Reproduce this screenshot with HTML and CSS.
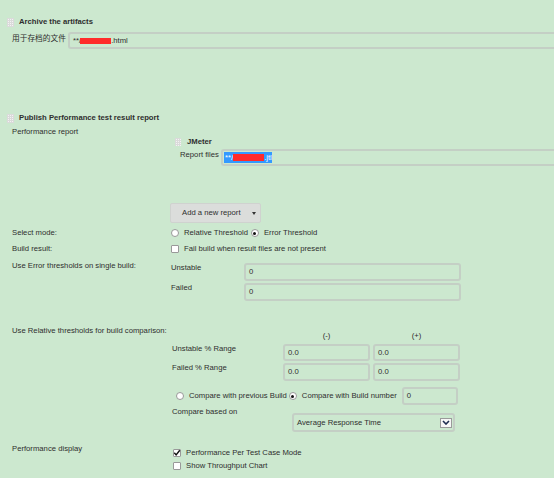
FILE: index.html
```html
<!DOCTYPE html>
<html>
<head>
<meta charset="utf-8">
<link rel="stylesheet" href="styles.css">
</head>
<body>
<div class="page">
  <section class="archive">
    <div class="head"><span class="grip"></span><span class="title">Archive the artifacts</span></div>
    <div class="line">
      <div class="lbl cn">用于存档的文件</div>
      <div class="field wide">**/<span class="redact r1"></span>.html</div>
    </div>
  </section>

  <section class="perf">
    <div class="head"><span class="grip"></span><span class="title">Publish Performance test result report</span></div>
    <div class="lbl top">Performance report</div>
    <div class="report">
      <div class="subhead"><span class="grip small"></span><span class="title">JMeter</span></div>
      <div class="line files">
        <div class="lbl">Report files</div>
        <div class="field wide tight"><span class="sel">**/<span class="redact r2"></span>.jtl</span></div>
      </div>
    </div>
    <div class="btnrow"><div class="btn">Add a new report<span class="caret"></span></div></div>

    <div class="row mode">
      <div class="lbl">Select mode:</div>
      <div class="ctl">
        <span class="radio"></span><span class="opt gap3">Relative Threshold</span>
        <span class="radio on"></span><span class="opt">Error Threshold</span>
      </div>
    </div>

    <div class="row build">
      <div class="lbl">Build result:</div>
      <div class="ctl">
        <span class="chk"></span><span class="opt">Fail build when result files are not present</span>
      </div>
    </div>

    <div class="row err">
      <div class="lbl">Use Error thresholds on single build:</div>
      <div class="errsub">
        <div class="sl">Unstable</div><div class="field ef">0</div>
        <div class="sl">Failed</div><div class="field ef">0</div>
      </div>
    </div>

    <div class="row rel">
      <div class="lbl">Use Relative thresholds for build comparison:</div>
      <div class="relsub">
        <div class="rr hdr"><span class="rl"></span><span class="rc">(-)</span><span class="rc">(+)</span></div>
        <div class="rr r1row"><span class="rl">Unstable % Range</span><div class="field sm h17">0.0</div><div class="field sm h17">0.0</div></div>
        <div class="rr r2row"><span class="rl">Failed % Range</span><div class="field sm">0.0</div><div class="field sm">0.0</div></div>
        <div class="cmp">
          <span class="radio"></span><span class="opt gap2">Compare with previous Build</span>
          <span class="radio on"></span><span class="opt gap5">Compare with Build number</span>
          <div class="field num">0</div>
        </div>
        <div class="based">
          <div class="bl">Compare based on</div>
          <div class="field select">Average Response Time<span class="dd"><svg width="8" height="5" viewBox="0 0 8 5"><path d="M1 1 L4 4 L7 1" fill="none" stroke="#1d2b4f" stroke-width="1.6"/></svg></span></div>
        </div>
      </div>
    </div>

    <div class="row disp">
      <div class="lbl">Performance display</div>
      <div class="checks">
        <div class="ck"><span class="chk"><svg width="8" height="8" viewBox="0 0 8 8"><path d="M1.3 3.8 L3.1 5.9 L6.8 1.2" fill="none" stroke="#111" stroke-width="1.4"/></svg></span><span class="opt">Performance Per Test Case Mode</span></div>
        <div class="ck"><span class="chk"></span><span class="opt">Show Throughput Chart</span></div>
      </div>
    </div>
  </section>
</div>
</body>
</html>
```

FILE: styles.css
```css
html, body {
  margin: 0;
  padding: 0;
}
body {
  background: #cce8cf;
  width: 554px;
  height: 478px;
  overflow: hidden;
  font-family: "Liberation Sans", Arial, sans-serif;
  font-size: 7.7px;
  line-height: 10px;
  color: #2e2e2e;
}
.page {
  padding: 17px 0 0 12px;
}
.head {
  display: flex;
  align-items: center;
  height: 10px;
  margin-left: -5px;
  gap: 5px;
}
.title {
  font-weight: bold;
  white-space: nowrap;
}
.grip {
  flex: none;
  width: 7px;
  height: 9px;
  background-color: #f3f3f3;
  background-image:
    linear-gradient(90deg, #dadada 1px, transparent 1px),
    linear-gradient(#dadada 1px, transparent 1px);
  background-size: 2px 2px;
}
.grip.small {
  width: 6px;
  height: 8px;
}
.lbl {
  white-space: nowrap;
}
.cn {
  font-family: "Noto Sans CJK SC", "Liberation Sans", sans-serif;
}
.line {
  display: flex;
  align-items: flex-start;
}
.archive .line {
  margin-top: 5px;
}
.archive .lbl {
  width: 56px;
  padding-top: 1px;
  flex: none;
}
.field {
  box-sizing: border-box;
  height: 18px;
  border: 2px solid #c4cfc5;
  border-radius: 3px;
  padding: 0 3px;
  display: flex;
  align-items: center;
  white-space: nowrap;
  flex: none;
}
.field.wide {
  flex: 1 1 auto;
  min-width: 0;
  height: 17px;
  border-right: none;
  border-radius: 3px 0 0 3px;
  overflow: hidden;
}
.field.tight {
  padding-left: 1px;
}
.redact {
  display: inline-block;
  background: #ff2b2b;
}
.r1 {
  width: 31px;
  height: 6px;
  margin-left: -1px;
}
.r2 {
  width: 31px;
  height: 7px;
}
.sel {
  display: inline-flex;
  align-items: center;
  height: 11px;
  background: #3399ff;
  color: #fff;
  padding: 0 0 0 1px;
}

.perf {
  margin-top: 64px;
}
.perf .top {
  margin-top: 4px;
}
.report {
  margin-left: 163px;
}
.subhead {
  display: flex;
  align-items: center;
  height: 10px;
  gap: 6px;
}
.files {
  margin-top: 2px;
}
.files .lbl {
  width: 41px;
  padding-left: 5px;
  padding-top: 1px;
  flex: none;
}
.btnrow {
  margin-top: 37px;
  margin-left: 158px;
}
.btn {
  box-sizing: border-box;
  width: 91px;
  height: 20px;
  background: #dbdddb;
  border: 1px solid #cfd2cf;
  border-radius: 2px;
  display: flex;
  align-items: center;
  padding-left: 11px;
  white-space: nowrap;
}
.caret {
  margin-left: auto;
  margin-right: 4px;
  width: 0;
  height: 0;
  border-left: 2.5px solid transparent;
  border-right: 2.5px solid transparent;
  border-top: 3px solid #333;
}

.row {
  display: grid;
  grid-template-columns: 159px 1fr;
  align-items: start;
}
.ctl {
  display: flex;
  align-items: center;
  height: 10px;
  white-space: nowrap;
}
.radio {
  flex: none;
  box-sizing: border-box;
  width: 8px;
  height: 8px;
  border: 1px solid #999;
  border-radius: 50%;
  background: #fff;
  margin-right: 5px;
  position: relative;
}
.radio.on::after {
  content: "";
  position: absolute;
  left: 1.5px;
  top: 1.5px;
  width: 3px;
  height: 3px;
  border-radius: 50%;
  background: #111;
}
.chk {
  flex: none;
  box-sizing: border-box;
  width: 8px;
  height: 8px;
  border: 1px solid #999;
  border-radius: 1px;
  background: #fff;
  margin-right: 5px;
  display: flex;
  align-items: center;
  justify-content: center;
}
.chk svg {
  flex: none;
}
.opt {
  white-space: nowrap;
}
.gap3 { margin-right: 3px; }
.gap2 { margin-right: 2px; }
.gap5 { margin-right: 5px; }

.mode { margin-top: 5px; }
.build { margin-top: 6px; }
.err { margin-top: 7px; }
.errsub {
  margin-top: 2px;
  display: grid;
  grid-template-columns: 73px 217px;
  row-gap: 2px;
  align-items: start;
}
.field.ef {
  width: 217px;
}

.rel { margin-top: 25px; }
.relsub {
  margin-top: 5px;
}
.rr {
  display: flex;
  align-items: flex-start;
  gap: 3px;
}
.rl {
  width: 108px;
  padding-left: 1px;
  white-space: nowrap;
  flex: none;
}
.rc {
  width: 87px;
  text-align: center;
  flex: none;
}
.hdr { height: 10px; }
.r1row { margin-top: 3px; }
.r2row { margin-top: 2px; }
.field.sm { width: 87px; }
.field.h17 { height: 17px; }
.cmp {
  margin-top: 6px;
  display: flex;
  align-items: center;
  padding-left: 5px;
  height: 18px;
}
.field.num {
  width: 56px;
}
.based {
  margin-top: 2px;
  display: flex;
  align-items: flex-start;
}
.bl {
  width: 120px;
  padding-left: 1px;
  flex: none;
  white-space: nowrap;
}
.field.select {
  margin-top: 6px;
  width: 163px;
  height: 19px;
}
.dd {
  margin-left: auto;
  margin-right: -2px;
  box-sizing: border-box;
  width: 12px;
  height: 10px;
  border: 1px solid #9a9a9a;
  background: #f6f6f6;
  display: flex;
  align-items: center;
  justify-content: center;
}
.disp { margin-top: 12px; }
.checks {
  margin-top: 2px;
  padding-left: 2px;
}
.ck {
  display: flex;
  align-items: center;
  height: 13px;
  white-space: nowrap;
}
```
